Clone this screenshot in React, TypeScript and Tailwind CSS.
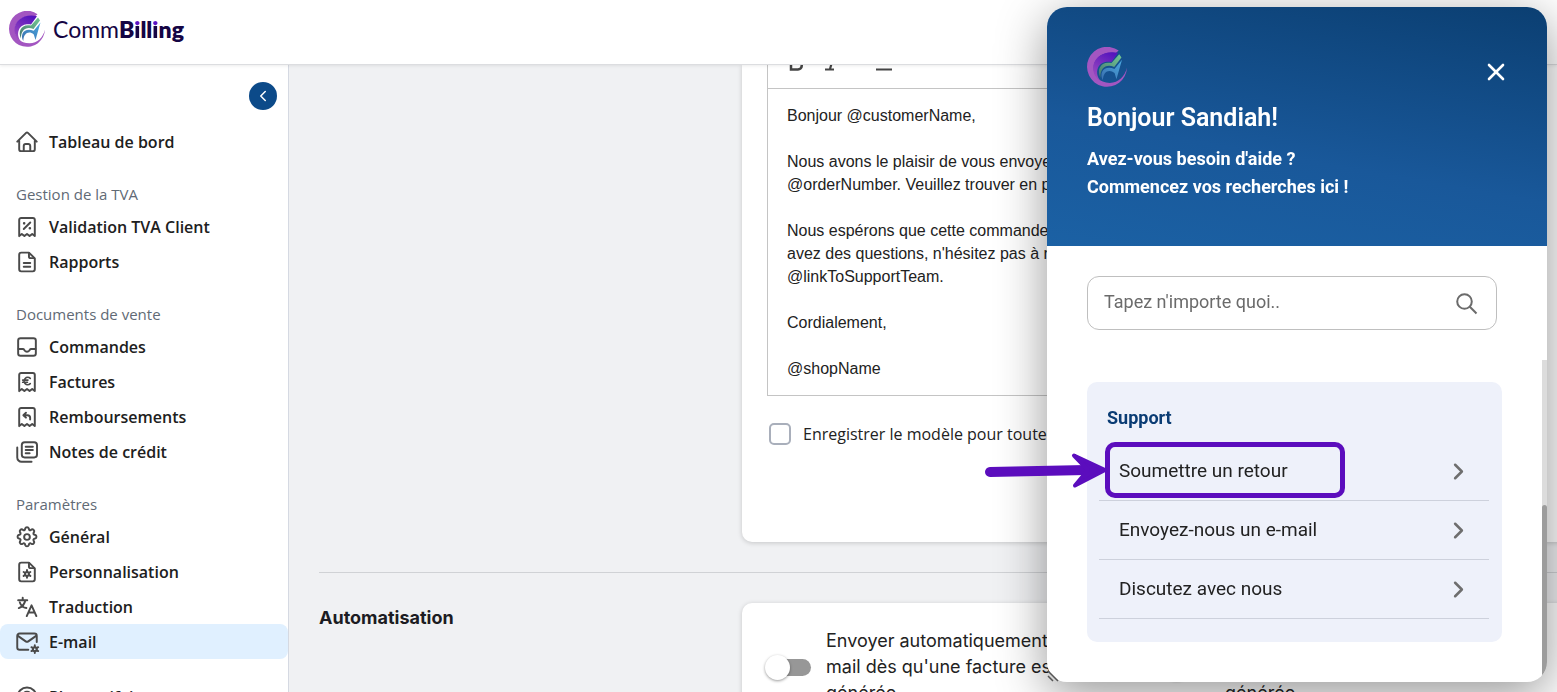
import type { ReactNode } from "react";
import { ChevronLeft, ChevronRight, X } from "lucide-react";

type IconName =
  | "home"
  | "taxes"
  | "file"
  | "orders"
  | "invoice"
  | "refund"
  | "notes"
  | "settings"
  | "theme"
  | "translate"
  | "email"
  | "profile";

const RECEIPT =
  "M4 17V4.5A1.5 1.5 0 0 1 5.500 3h9A1.500 1.500 0 0 1 16 4.500V17l-2-1.700-2 1.700-2-1.700-2 1.700-2-1.700Z";

const FLOWER =
  "M0-3V-1.500M0 3V1.500M-2.600-1.500-1.300-.75M2.600 1.500 1.300.75M2.600-1.500 1.300-.75M-2.600 1.500-1.300.75";

const icons: Record<IconName, ReactNode> = {
  home: (
    <path d="M2.500 9.700 9.300 3a1 1 0 0 1 1.400 0l6.800 6.700M4 8.800v6.700A1.500 1.500 0 0 0 5.500 17h9a1.500 1.500 0 0 0 1.500-1.500V8.800M7.500 17v-4a1.500 1.500 0 0 1 1.500-1.500h2a1.500 1.500 0 0 1 1.500 1.500v4" />
  ),
  taxes: (
    <>
      <path d={RECEIPT} />
      <path d="m7.500 11.500 5-5" />
      <path strokeWidth="2" d="M7.800 7.200h.01M12.200 11h.01" />
    </>
  ),
  file: (
    <>
      <path d="M11.500 2.800H5.600A1.600 1.600 0 0 0 4 4.400v11.200a1.600 1.600 0 0 0 1.600 1.600h8.800a1.600 1.600 0 0 0 1.600-1.600V7.200Z" />
      <path d="M11.500 3v2.700A1.300 1.300 0 0 0 12.800 7h2.700M7.500 10.700h5M7.500 13.700h5" />
    </>
  ),
  orders: (
    <>
      <rect x="3.200" y="3.200" width="13.600" height="13.600" rx="1.800" />
      <path d="M3.500 11.500h3.300c.4 0 .8.200 1 .6l.4.600c.9 1.200 2.700 1.200 3.600 0l.4-.600c.2-.4.6-.600 1-.600h3.300" />
    </>
  ),
  invoice: (
    <>
      <path d={RECEIPT} />
      <path d="M12.500 7.200a2.800 2.800 0 1 0 0 4.100M6.700 8.500h4M6.700 10.200h3.600" strokeWidth="1.300" />
    </>
  ),
  refund: (
    <>
      <path d={RECEIPT} />
      <path d="M9.200 6.700 7.200 8.600l2 1.900M7.400 8.600h3a2 2 0 0 1 2 2V12" />
    </>
  ),
  notes: (
    <>
      <rect x="6" y="2.500" width="11.700" height="11.700" rx="2.200" />
      <path d="M2.500 6.500v7.700a3.300 3.300 0 0 0 3.300 3.300h7.700M9 6h5.500M9 8.500h5.500M9 11h3" />
    </>
  ),
  settings: (
    <>
      <path d="M8.700 3.300c.3-1 2.300-1 2.600 0l.3 1c.2.500.7.700 1.200.4l.9-.5c.9-.5 2.200.9 1.800 1.800l-.5.9c-.2.500 0 1 .4 1.200l1.100.4c1 .3 1 2.300 0 2.600l-1.100.4c-.4.2-.6.700-.4 1.200l.5.900c.4.900-.9 2.200-1.800 1.800l-.9-.5c-.5-.3-1 0-1.200.4l-.3 1.100c-.3 1-2.300 1-2.600 0l-.3-1.100c-.2-.4-.7-.7-1.200-.4l-.9.500c-.9.400-2.200-.9-1.800-1.800l.5-.9c.2-.5 0-1-.4-1.200l-1.100-.4c-1-.3-1-2.300 0-2.600l1.100-.4c.4-.2.600-.7.4-1.200l-.5-.9c-.4-.9.900-2.300 1.800-1.800l.9.500c.5.300 1 .1 1.200-.4Z" />
      <circle cx="10" cy="10" r="2.200" />
    </>
  ),
  theme: (
    <>
      <path d="M11.500 2.800H5.600A1.600 1.600 0 0 0 4 4.400v11.200a1.600 1.600 0 0 0 1.600 1.600h8.800a1.600 1.600 0 0 0 1.600-1.600V7.200Z" />
      <path d="M11.500 3v2.700A1.300 1.300 0 0 0 12.800 7h2.700" />
      <path transform="translate(10 11.500)" d={FLOWER} />
      <circle cx="10" cy="11.500" r="1.500" />
    </>
  ),
  translate: (
    <>
      <path d="M3.200 4.800h7M6.700 2.800v2M8.700 4.800c-.5 2.900-2.300 5-5 6M4.500 6.500c.8 2.300 2.500 3.900 5 4.300" />
      <path d="m9.800 17 3.700-8.300 3.700 8.300M11.200 14.300h4.700" />
    </>
  ),
  email: (
    <>
      <path d="M11 16H4.300a1.800 1.800 0 0 1-1.800-1.800V5.300a1.800 1.800 0 0 1 1.800-1.800h11.400a1.800 1.800 0 0 1 1.800 1.800V10" />
      <path d="m3 5.300 6 4.200a1.700 1.700 0 0 0 2 0l6-4.200" />
      <path transform="translate(16 15.500)" d={FLOWER} />
      <circle cx="16" cy="15.500" r="1.500" />
    </>
  ),
  profile: (
    <>
      <circle cx="10" cy="10" r="7.300" />
      <circle cx="10" cy="8.300" r="2.400" />
      <path d="M5.500 15.500c2-3 7-3 9 0" />
    </>
  ),
};

const navGroups: Array<{ title?: string; items: Array<{ label: string; icon: IconName }> }> = [
  { items: [{ label: "Tableau de bord", icon: "home" }] },
  {
    title: "Gestion de la TVA",
    items: [
      { label: "Validation TVA Client", icon: "taxes" },
      { label: "Rapports", icon: "file" },
    ],
  },
  {
    title: "Documents de vente",
    items: [
      { label: "Commandes", icon: "orders" },
      { label: "Factures", icon: "invoice" },
      { label: "Remboursements", icon: "refund" },
      { label: "Notes de crédit", icon: "notes" },
    ],
  },
  {
    title: "Paramètres",
    items: [
      { label: "Général", icon: "settings" },
      { label: "Personnalisation", icon: "theme" },
      { label: "Traduction", icon: "translate" },
      { label: "E-mail", icon: "email" },
    ],
  },
  { items: [{ label: "Plan tarifaire", icon: "profile" }] },
];

const supportLinks = ["Soumettre un retour", "Envoyez-nous un e-mail", "Discutez avec nous"];

const sansCls = "font-['Open_Sans','Noto_Sans',sans-serif]";

function NavIcon({ name }: { name: IconName }) {
  return (
    <svg
      viewBox="0 0 20 20"
      className="size-[26px] shrink-0 text-[#4a4a4a]"
      fill="none"
      stroke="currentColor"
      strokeWidth="1.500"
      strokeLinecap="round"
      strokeLinejoin="round"
      aria-hidden="true"
    >
      {icons[name]}
    </svg>
  );
}

function LogoMark({ id, className }: { id: string; className: string }) {
  return (
    <svg viewBox="0 0 36 36" className={className} aria-hidden="true">
      <defs>
        <linearGradient id={`${id}-violet`} x1="0.7" y1="0" x2="0.2" y2="1">
          <stop offset="0" stopColor="#5514bd" />
          <stop offset="1" stopColor="#a34fc0" />
        </linearGradient>
        <linearGradient id={`${id}-green`} x1="1" y1="0" x2="0" y2="1">
          <stop offset="0" stopColor="#74c795" />
          <stop offset="1" stopColor="#45796f" />
        </linearGradient>
        <linearGradient id={`${id}-blue`} x1="1" y1="0" x2="0" y2="1">
          <stop offset="0" stopColor="#4ba9e0" />
          <stop offset="1" stopColor="#3a6fae" />
        </linearGradient>
      </defs>
      <path
        fill="#a356c1"
        d="M28.500 3.200A18 18 0 1 0 36 18.500C34 26.500 28.500 32.300 20.500 32.300 11 32.300 6 26 6 19 6 10 14 3.500 26 5.500Z"
      />
      <path
        fill={`url(#${id}-violet)`}
        d="M28 5.200C15 2.500 5.500 9.500 5.500 19c0 5 2.500 9.500 7 12C9.500 28 8 23 10 18.500 12.500 13.500 17.500 12.800 22 13.500Z"
      />
      <path
        fill={`url(#${id}-green)`}
        d="M29 6.500 31 9.500 24.500 18C17.500 15 11.800 18.500 12 27.500 8.500 20 12.500 12.500 22 14.500Z"
      />
      <path
        fill={`url(#${id}-blue)`}
        d="M31.500 11.500 26.500 29 24.800 23.500C20 19.500 14.500 22 14.300 30 10.500 23 15.500 16 24.700 19.700Z"
      />
    </svg>
  );
}

function Wordmark() {
  const dotCls =
    "bg-linear-to-b from-[#5b12c4] from-35% to-[#150544] to-35% bg-clip-text text-transparent";

  return (
    <span className="font-['Lato',sans-serif] text-[23px] leading-8 text-[#150544]">
      Comm
      <b className="font-extrabold">
        B<span className={dotCls}>i</span>ll<span className={dotCls}>i</span>ng
      </b>
    </span>
  );
}

function Sidebar() {
  return (
    <nav className={`w-[289px] shrink-0 overflow-hidden border-r border-[#d5d9e2] bg-white ${sansCls}`}>
      <div className="flex justify-end pt-[17px] pr-[11px] pb-[14px]">
        <button
          type="button"
          aria-label="Réduire le menu"
          className="flex size-7 items-center justify-center rounded-full bg-[#0c4a89] text-white"
        >
          <ChevronLeft size={18} />
        </button>
      </div>
      <div className="flex flex-col gap-5">
        {navGroups.map((group) => (
          <section key={group.items[0].label}>
            {group.title ? (
              <h2 className="h-[30px] px-4 text-[15px] leading-[30px] text-[#616a75]">
                {group.title}
              </h2>
            ) : null}
            {group.items.map((item) => (
              <a
                key={item.label}
                href="#"
                className={
                  item.label === "E-mail"
                    ? "flex h-[35px] items-center gap-[9px] rounded-lg bg-[#e0f0ff] pl-[14px] text-base font-semibold text-[#202020]"
                    : "flex h-[35px] items-center gap-[9px] pl-[14px] text-base font-semibold text-[#202020]"
                }
              >
                <NavIcon name={item.icon} />
                {item.label}
              </a>
            ))}
          </section>
        ))}
      </div>
    </nav>
  );
}

function EditorCard() {
  return (
    <div className="flex-1 rounded-b-[10px] bg-white pr-12 pb-[97px] pl-[25px] shadow-[0_1px_5px_rgba(0,0,0,0.18)]">
      <div className="border-x border-b border-[#c4c4c4]">
        <div className="flex h-6 items-end gap-5 overflow-hidden border-b border-[#c4c4c4] pb-[17px] pl-5 text-[#444]">
          <button type="button" aria-label="Gras" className="w-4">
            <svg viewBox="0 0 16 18" className="h-[18px] w-4" fill="none" stroke="currentColor" strokeWidth="2.500">
              <path d="M3 2h6a3.500 3.500 0 0 1 0 7H3Zm0 7h7a3.700 3.700 0 0 1 0 7.500H3Z" />
            </svg>
          </button>
          <button type="button" aria-label="Italique" className="w-4">
            <svg viewBox="0 0 16 18" className="h-[18px] w-4" fill="none" stroke="currentColor" strokeWidth="2.200">
              <path d="M5 2h9M1 16.500h9M10 2 6 16" />
            </svg>
          </button>
          <button type="button" aria-label="Souligné" className="ml-4 w-4">
            <svg viewBox="0 0 16 18" className="h-[18px] w-4" fill="none" stroke="currentColor" strokeWidth="2.200">
              <path d="M3 0v4a5 5 0 0 0 10 0V0M0 16.500h16" />
            </svg>
          </button>
        </div>
        <div className="space-y-[23px] px-[19px] pt-[15px] pb-[15px] font-['Liberation_Sans',sans-serif] text-base leading-[23px] whitespace-nowrap text-[#222]">
          <p>Bonjour @customerName,</p>
          <p>
            Nous avons le plaisir de vous envoyer la commande
            <br />
            @orderNumber. Veuillez trouver en pièce jointe
          </p>
          <p>
            Nous espérons que cette commande vous plaira. Si vous
            <br />
            avez des questions, n'hésitez pas à nous contacter via
            <br />
            @linkToSupportTeam.
          </p>
          <p>Cordialement,</p>
          <p>@shopName</p>
        </div>
      </div>
      <label className={`mt-[27px] ml-[2px] flex items-center gap-3 text-base leading-[22px] text-[#222] ${sansCls}`}>
        <input
          type="checkbox"
          className="size-[22px] shrink-0 appearance-none rounded-[5px] border-2 border-[#a9afbb] bg-white"
        />
        Enregistrer le modèle pour toutes les langues
      </label>
    </div>
  );
}

function ToggleField({ label }: { label: string }) {
  return (
    <label className="flex w-[399px] shrink-0 items-center gap-[15px]">
      <input
        type="checkbox"
        role="switch"
        className="flex h-[17px] w-[46px] shrink-0 appearance-none items-center rounded-full bg-linear-to-r from-transparent from-15% to-[#979797] to-15% before:block before:size-[25px] before:shrink-0 before:rounded-full before:bg-white before:shadow-[0_1px_3px_rgba(0,0,0,0.4)]"
      />
      <span className="w-[260px]">{label}</span>
    </label>
  );
}

function MainContent() {
  return (
    <main className="min-w-0 flex-1 overflow-hidden bg-[#f0f1f3] pl-[30px]">
      {/* Cards bleed past the window edge */}
      <div className="-mr-5">
        <div className="flex">
          <div className="w-[423px] shrink-0" />
          <EditorCard />
        </div>
        <hr className="my-[30px] border-[#d0d2d5]" />
        <div className="flex font-['Inter',sans-serif] text-[18px] leading-[26px] text-[#222]">
          <h2 className="w-[423px] shrink-0 pt-[2px] font-bold text-[#1c1c22]">Automatisation</h2>
          <div className="flex min-w-0 flex-1 rounded-t-[10px] bg-white px-[23px] pt-[25px] pb-8 shadow-[0_1px_5px_rgba(0,0,0,0.18)]">
            <ToggleField label="Envoyer automatiquement l'e-mail dès qu'une facture est générée" />
            <ToggleField label="Envoyer automatiquement l'e-mail dès qu'une note est générée" />
          </div>
        </div>
      </div>
    </main>
  );
}

function Callout() {
  return (
    <span className="pointer-events-none absolute top-0 left-[6px] h-[56px] w-[240px] rounded-[10px] border-5 border-[#5b0dbd]" />
  );
}

function HelpWidget() {
  return (
    <aside className="fixed top-[7px] right-[10px] bottom-[10px] w-[500px] font-['Roboto',sans-serif]">
      <div className="h-full overflow-hidden rounded-[20px] bg-white shadow-[0_12px_50px_rgba(0,0,0,0.42)]">
        <header className="h-[239px] bg-linear-[190deg,#0b3f72,#19589a_60%,#1b61a4] px-10 pt-10 text-white">
          <div className="flex items-start justify-between">
            <LogoMark id="widget" className="size-10" />
            <button type="button" aria-label="Fermer" className="mt-[11px] -mr-[3px]">
              <X size={28} strokeWidth={2.25} />
            </button>
          </div>
          <h2 className="mt-[13px] text-[25px] leading-9 font-semibold">Bonjour Sandiah!</h2>
          <p className="mt-[9px] text-[18px] leading-7 font-bold">
            Avez-vous besoin d'aide ?
            <br />
            Commencez vos recherches ici !
          </p>
        </header>

        <div className="pt-[30px] pr-[45px] pl-10">
          <label className="mr-[5px] flex h-[54px] items-center rounded-xl border border-[#bfbfbf] pr-[18px] pl-4">
            <input
              type="text"
              aria-label="Rechercher"
              placeholder="Tapez n'importe quoi.."
              className="min-w-0 flex-1 pb-1 text-[18px] outline-none placeholder:text-[#6b6b6b]"
            />
            <svg viewBox="0 0 24 24" className="size-6 text-[#6b6b6b]" fill="none" stroke="currentColor" strokeWidth="2">
              <circle cx="10.500" cy="10.500" r="7.300" />
              <path d="m15.800 15.800 6.700 6.700" />
            </svg>
          </label>

          <section className="mt-[52px] rounded-[10px] bg-[#eef1fa] pr-[13px] pb-[23px] pl-3">
            <h3 className="px-2 pt-[22px] pb-[10px] text-[18px] leading-7 font-bold text-[#0a3c74]">Support</h3>
            <ul>
              {supportLinks.map((link, index) => (
                <li key={link} className="relative border-b border-[#cdd1dc]">
                  <a href="#" className="flex h-[58px] items-center justify-between pr-[17px] pl-5 text-[19px] text-[#222]">
                    {link}
                    <ChevronRight size={27} strokeWidth={2.25} className="text-[#6e6e6e]" />
                  </a>
                  {index === 0 ? <Callout /> : null}
                </li>
              ))}
            </ul>
          </section>
        </div>
      </div>

      {/* Scrollbar */}
      <div className="pointer-events-none absolute inset-0 overflow-hidden rounded-[20px]">
        <div className="absolute top-[353px] right-0 bottom-0 w-[5px] bg-[#dcdcdc]">
          <div className="mt-[145px] h-full rounded-t-full bg-[#9c9c9c]" />
        </div>
      </div>

      {/* Resize grip */}
      <svg viewBox="0 0 12 12" className="absolute bottom-0 left-0 size-3" stroke="#555" strokeWidth="1.500">
        <path d="M1 1 11 11M1 6l5 5" />
      </svg>

      <svg viewBox="0 0 124 40" className="absolute top-[443px] left-[-63px] h-10 w-[124px]" aria-hidden="true">
        <path d="M6 22 102 20" stroke="#5b0dbd" strokeWidth="10" strokeLinecap="round" />
        <path
          d="M90 5.500 121 20 91 35.500 104 20Z"
          fill="#5b0dbd"
          stroke="#5b0dbd"
          strokeWidth="4"
          strokeLinejoin="round"
        />
      </svg>
    </aside>
  );
}

export default function App() {
  return (
    <div className="flex h-screen flex-col overflow-hidden bg-white">
      <header className="relative flex h-[65px] shrink-0 items-center border-b border-[#dcdde0] pb-[7px] pl-[9px] shadow-[0_1px_3px_rgba(0,0,0,0.08)]">
        <a href="#" className="flex items-center gap-2">
          <LogoMark id="brand" className="size-9" />
          <Wordmark />
        </a>
      </header>
      <div className="flex min-h-0 flex-1">
        <Sidebar />
        <MainContent />
      </div>
      <HelpWidget />
    </div>
  );
}
